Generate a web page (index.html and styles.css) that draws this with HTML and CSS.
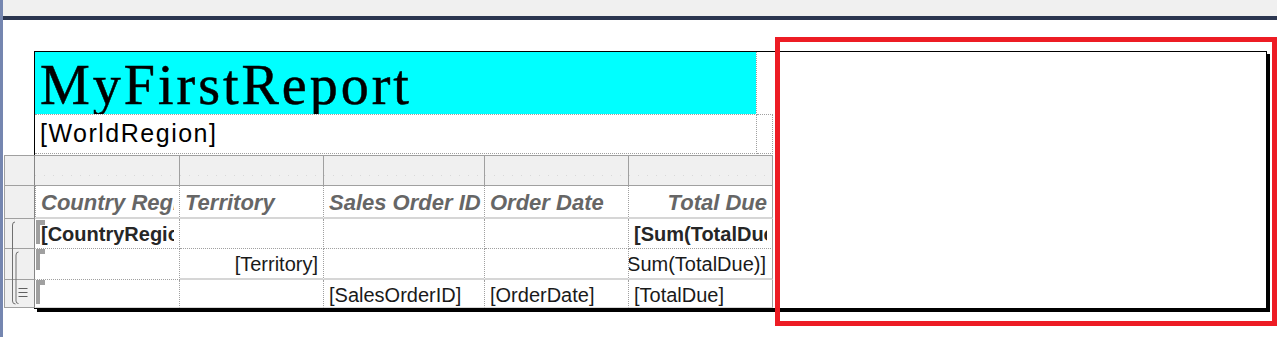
FILE: index.html
```html
<!DOCTYPE html>
<html lang="en">
<head>
  <meta charset="UTF-8" />
  <title>MyFirstReport - Design</title>
  <link rel="stylesheet" href="styles.css">
</head>
<body>
  <div class="frame">
    <div class="edge"></div>
    <div class="main">
      <div class="toolbar"></div>
      <div class="rule"></div>

      <div class="canvas">
        <div class="report">
          <div class="row">
            <div class="title">MyFirstReport</div>
            <div class="cap"></div>
          </div>
          <div class="row">
            <div class="region">[WorldRegion]</div>
            <div class="filler"></div>
          </div>

          <div class="tablix">
            <!-- column handles -->
            <div class="h first"></div>
            <div class="g"></div>
            <div class="g"></div>
            <div class="g"></div>
            <div class="g"></div>
            <div class="g last"></div>

            <!-- header row -->
            <div class="h"></div>
            <div class="c hd col1"><span class="clip">Country Region</span></div>
            <div class="c hd">Territory</div>
            <div class="c hd">Sales Order ID</div>
            <div class="c hd">Order Date</div>
            <div class="c hd right last">Total Due</div>

            <!-- country group -->
            <div class="h"></div>
            <div class="c rb col1 grp g1 bold"><span class="clip">[CountryRegion]</span></div>
            <div class="c rb"></div>
            <div class="c rb"></div>
            <div class="c rb"></div>
            <div class="c rb last bold"><span class="clip">[Sum(TotalDue)]</span></div>

            <!-- territory group -->
            <div class="h"></div>
            <div class="c rc col1 grp g2 dotb"></div>
            <div class="c rc right">[Territory]</div>
            <div class="c rc"></div>
            <div class="c rc"></div>
            <div class="c rc right last"><span>[Sum(TotalDue)]</span></div>

            <!-- details -->
            <div class="h"></div>
            <div class="c rd col1 grp g3"></div>
            <div class="c rd"></div>
            <div class="c rd">[SalesOrderID]</div>
            <div class="c rd">[OrderDate]</div>
            <div class="c rd last">[TotalDue]</div>

            <svg class="brackets" width="31" height="88" viewBox="0 0 31 88">
              <path d="M11 3 Q8.5 3 8.5 6 V82 Q8.5 85 11.5 85" fill="none" stroke="#707070" stroke-width="1"/>
              <path d="M14.5 33 Q12 33 12 36 V82 Q12 84.5 14.5 84.5" fill="none" stroke="#707070" stroke-width="1"/>
              <path d="M14.5 69.5 H23.5 M14.5 73.5 H23.5 M14.5 77.5 H23.5" stroke="#606060" stroke-width="1"/>
            </svg>
          </div>
        </div>
      </div>
    </div>
  </div>

  <div class="callout"></div>
</body>
</html>
```

FILE: styles.css
```css
body {
  margin: 0;
  font-family: 'Liberation Sans', Arial, sans-serif;
  background-color: #fff;
  color: #1a1a1a;
}
.frame {
  display: flex;
  width: 1277px;
  height: 337px;
  overflow: hidden;
}
.edge {
  width: 3px;
  background-color: #7586b0;
  flex: none;
}
.main {
  flex: 1;
  display: flex;
  flex-direction: column;
}
.toolbar {
  height: 16px;
  background-color: #f0f0f0;
}
.rule {
  height: 4px;
  background-color: #2b3650;
}
.canvas {
  flex: 1;
  background: #fff;
  padding: 31px 0 0 31px;
}
.report {
  box-sizing: border-box;
  width: 1233px;
  height: 258px;
  border: 1px solid #000;
  box-shadow: 3px 3px 0 #000;
  background: #fff;
}
.row {
  display: flex;
}
.title {
  box-sizing: border-box;
  width: 722px;
  height: 63px;
  padding: 5px 0 0 5px;
  background-color: #00ffff;
  background-clip: padding-box;
  border-right: 1px dotted #a0a0a0;
  border-bottom: 1px dotted #a0a0a0;
  font-family: 'Liberation Serif', 'Times New Roman', serif;
  font-size: 56px;
  line-height: 56px;
  letter-spacing: 3px;
  color: #000;
  -webkit-text-stroke: 0.5px #000;
  overflow: hidden;
  white-space: nowrap;
}
.cap {
  box-sizing: border-box;
  width: 16px;
  height: 63px;
  border-bottom: 1px dotted #a0a0a0;
}
.region {
  box-sizing: border-box;
  width: 722px;
  height: 39px;
  padding: 4px 0 0 5px;
  border-right: 1px dotted #a0a0a0;
  border-bottom: 1px dotted #a0a0a0;
  font-size: 25px;
  line-height: 29px;
  letter-spacing: 1.5px;
  color: #000;
  white-space: nowrap;
  overflow: hidden;
}
.filler {
  box-sizing: border-box;
  width: 16px;
  height: 39px;
  border-right: 1px dotted #a0a0a0;
  border-bottom: 1px dotted #a0a0a0;
}

/* tablix */
.tablix {
  position: relative;
  display: grid;
  grid-template-columns: 31px 145px 144px 161px 144px 144px;
  grid-template-rows: 31px 33px 30px 31px 28px;
  margin: 1px 0 0 -31px;
  width: 769px;
}
.tablix > div {
  box-sizing: border-box;
}
.h {
  background: #f0f0f0;
  border-left: 1px solid #a0a0a0;
  border-right: 1px solid #868686;
  border-bottom: 1px solid #a0a0a0;
}
.h.first {
  border-top: 1px solid #a0a0a0;
}
.g {
  background-color: #f0f0f0;
  background-image: repeating-linear-gradient(to right, #d9d9d9 0 1px, transparent 1px 9px);
  background-size: 100% 1px;
  background-position: 0 19px;
  background-repeat: no-repeat;
  border-top: 1px solid #a0a0a0;
  border-bottom: 1px solid #a0a0a0;
  border-right: 1px solid #a0a0a0;
}
.c {
  position: relative;
  overflow: hidden;
  white-space: nowrap;
  border-right: 1px dotted #a0a0a0;
  font-size: 20px;
  line-height: 23px;
  padding: 4px 5px 0 5px;
}
.c.last {
  border-right: 1px solid #a0a0a0;
}
.clip {
  display: block;
  overflow: hidden;
}
.col1 {
  border-left: 1px solid transparent;
}
.hd {
  font-size: 22px;
  font-weight: 700;
  font-style: italic;
  line-height: 25px;
  color: #666;
  padding-top: 4px;
  border-bottom: 2px solid #d6d6d6;
}
.hd.col1 {
  border-left: 1px dotted #a0a0a0;
}
.rb {
  padding-top: 4px;
  border-bottom: 1px dotted #a0a0a0;
}
.rc {
  border-bottom: 2px solid #d6d6d6;
}
.rc.dotb {
  border-bottom: 1px dotted #a0a0a0;
}
.rd {
  border-bottom: 1px solid #d6d6d6;
}
.right {
  display: flex;
  justify-content: flex-end;
}
.bold {
  font-weight: 700;
  color: #262626;
}
.rc.right.last {
  padding-right: 6px;
}

/* group markers in the first column */
.grp::before {
  content: '';
  position: absolute;
  left: -1px;
  width: 10px;
  background:
    linear-gradient(#a0a0a0, #a0a0a0) 0 0 / 10px 5px no-repeat,
    linear-gradient(#a0a0a0, #a0a0a0) 0 0 / 5px 100% no-repeat;
}
.g1::before { top: 1px; bottom: 4px; }
.g2::before { top: 0; bottom: 9px; }
.g3::before { top: 0; bottom: 3px; }

.brackets {
  position: absolute;
  left: 0;
  top: 64px;
}

/* annotation drawn over the page */
.callout {
  position: absolute;
  left: 775px;
  top: 37px;
  width: 502px;
  height: 289px;
  box-sizing: border-box;
  border: 5px solid #ed1c24;
}
```
